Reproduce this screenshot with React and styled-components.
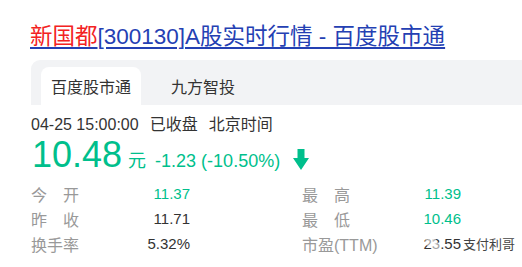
import React from "react";
import styled, { createGlobalStyle } from "styled-components";

const GREEN = "#00bf8c";

const GlobalStyle = createGlobalStyle`
  body {
    margin: 0;
    background: #fff;
    font-family: "Liberation Sans", Arial, "Noto Sans CJK SC", sans-serif;
    color: #333;
  }
`;

const Page = styled.div`
  width: 522px;
  height: 267px;
  overflow: hidden;
  padding: 22px 0 0 31px;
  box-sizing: border-box;
  position: relative;
`;

const Title = styled.a`
  display: block;
  margin-left: -1px;
  font-size: 22.5px;
  line-height: 30px;
  color: #2440b3;
  text-decoration: underline;
  text-decoration-thickness: 2px;
  text-underline-offset: 3px;
  white-space: nowrap;
  em {
    font-style: normal;
    color: #f32222;
  }
`;

const TabBar = styled.div`
  margin-top: 8px;
  height: 45px;
  background: #f2f3f5;
  border-radius: 9px 0 0 0;
  padding: 7px 0 0 10px;
  box-sizing: border-box;
  display: flex;
  align-items: flex-end;
  gap: 20px;
`;

const Tab = styled.div`
  height: 38px;
  padding: 0 10px;
  display: flex;
  align-items: center;
  font-size: 16px;
  color: #333;
  border-radius: 8px 8px 0 0;
  background: ${(p) => (p.active ? "#fff" : "transparent")};
`;

const TimeRow = styled.div`
  margin-top: 10px;
  font-size: 16px;
  line-height: 20px;
  color: #333;
  white-space: nowrap;
  span + span {
    margin-left: 11px;
  }
`;

const PriceRow = styled.div`
  display: flex;
  align-items: baseline;
  height: 40px;
  color: ${GREEN};
`;

const Price = styled.span`
  font-size: 36px;
  line-height: 40px;
  margin-left: 1px;
`;

const Unit = styled.span`
  font-size: 18px;
  margin-left: 6px;
`;

const Change = styled.span`
  font-size: 18px;
  margin-left: 9px;
`;

const Arrow = styled.svg`
  margin-left: 13px;
  align-self: center;
  margin-top: 8px;
`;

const Stats = styled.div`
  margin-top: 6px;
  display: grid;
  grid-template-columns: 271px 271px;
`;

const Stat = styled.div`
  display: flex;
  height: 25px;
  align-items: center;
`;

const Label = styled.span`
  width: 100px;
  font-size: 16px;
  color: #999;
  white-space: nowrap;
`;

const Value = styled.span`
  width: 59px;
  text-align: right;
  font-size: 15px;
  color: ${(p) => (p.up ? GREEN : "#333")};
`;

const Watermark = styled.div`
  position: absolute;
  left: 424px;
  top: 235px;
  width: 90px;
  height: 20px;
`;

const WeChatMark = styled.svg`
  position: absolute;
  left: 0;
  top: 0;
`;

const MarkText = styled.span`
  position: absolute;
  left: 39px;
  top: 1px;
  font-size: 13px;
  line-height: 18px;
  color: #444;
  white-space: nowrap;
`;

const stats = [
  ["今\u3000开", "11.37", true, "最\u3000高", "11.39", true],
  ["昨\u3000收", "11.71", false, "最\u3000低", "10.46", true],
  ["换手率", "5.32%", false, "市盈(TTM)", "23.55", false],
];

export default function App() {
  return (
    <Page>
      <GlobalStyle />
      <Title href="#">
        <em>新国都</em>[300130]A股实时行情 - 百度股市通
      </Title>
      <TabBar>
        <Tab active>百度股市通</Tab>
        <Tab>九方智投</Tab>
      </TabBar>
      <TimeRow>
        <span>04-25 15:00:00</span>
        <span>已收盘</span>
        <span>北京时间</span>
      </TimeRow>
      <PriceRow>
        <Price>10.48</Price>
        <Unit>元</Unit>
        <Change>-1.23 (-10.50%)</Change>
        <Arrow width="16" height="21" viewBox="0 0 16 21">
          <path d="M4.5 0H11.5V9H16L8 21L0 9H4.5Z" fill={GREEN} />
        </Arrow>
      </PriceRow>
      <Stats>
        {stats.map(([l1, v1, u1, l2, v2, u2]) => (
          <React.Fragment key={l1}>
            <Stat>
              <Label>{l1}</Label>
              <Value up={u1}>{v1}</Value>
            </Stat>
            <Stat>
              <Label>{l2}</Label>
              <Value up={u2}>{v2}</Value>
            </Stat>
          </React.Fragment>
        ))}
      </Stats>
      <Watermark>
        <WeChatMark width="18" height="18" viewBox="0 0 18 18">
          <ellipse cx="7" cy="7" rx="6" ry="5" fill="#fff" opacity="0.55" />
          <ellipse cx="12" cy="11" rx="5" ry="4" fill="#fff" opacity="0.55" />
          <circle cx="5" cy="5" r="0.8" fill="#ccc" />
          <circle cx="9" cy="5" r="0.8" fill="#ccc" />
        </WeChatMark>
        <MarkText>支付利哥</MarkText>
      </Watermark>
    </Page>
  );
}
